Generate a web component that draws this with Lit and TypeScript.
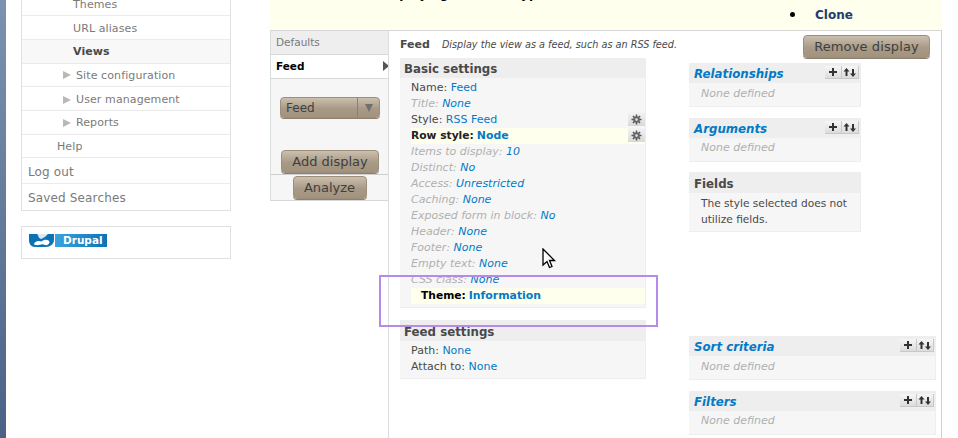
import { LitElement, html, css } from "lit";
import { customElement } from "lit/decorators.js";

const gear = html`<span class="gear"><svg width="11" height="11" viewBox="0 0 12 12"><g stroke="#555" stroke-width="1.6"><path d="M6 0.5V11.5M0.5 6H11.5M2.1 2.1L9.9 9.9M9.9 2.1L2.1 9.9"/></g><circle cx="6" cy="6" r="3.6" fill="#666"/><circle cx="6" cy="6" r="1.5" fill="#ddd"/></svg></span>`;

const addRearrange = html`<span class="ops"><span class="op"><svg width="10" height="10" viewBox="0 0 10 10"><path d="M5 1V9M1 5H9" stroke="#333" stroke-width="2"/></svg></span><span class="op"><svg width="14" height="11" viewBox="0 0 14 11"><path d="M3.5 1L6.5 4.5H4.5V9H2.5V4.5H0.5Z" fill="#333"/><path d="M10 10L13 6.5H11V2H9V6.5H7Z" fill="#333"/></svg></span></span>`;

@customElement("app-root")
export class AppRoot extends LitElement {
  static styles = css`
    :host { display: block; position: relative; width: 958px; height: 438px; overflow: hidden; background: #fff;
      font-family: "DejaVu Sans", sans-serif; font-size: 11px; color: #494949; }
    * { box-sizing: border-box; }
    a { color: #027ac6; text-decoration: none; }
    .page { display: flex; align-items: flex-start; height: 438px; }
    .strip { width: 6px; height: 438px; flex: none; background: linear-gradient(#7c92ae, #4a6286); }
    .side { width: 210px; margin-left: 15px; flex: none; }
    .menu { border: 1px solid #e0e0e0; border-top: 0; color: #7a7a7a; }
    .m { display: flex; align-items: center; height: 24px; border-bottom: 1px solid #ebebeb; font-size: 11px; letter-spacing: .1px; }
    .m:last-child { border-bottom: 0; }
    .first { height: 16px; padding-bottom: 7px; }
    .h23 { height: 23px; }
    .low { padding-top: 2px; }
    .l3 { padding-left: 51px; }
    .l2 { padding-left: 41px; }
    .l2::before { content: ""; width: 0; height: 0; margin-right: 5px; border-left: 8px solid #b8b8b8; border-top: 4px solid transparent; border-bottom: 4px solid transparent; }
    .l1 { padding-left: 35px; }
    .l0 { padding-left: 6px; padding-top: 2px; font-size: 12px; height: 26px; letter-spacing: .15px; }
    .cur { background: #f8f8f8; color: #494949; font-weight: bold; }
    .drupal { margin-top: 15px; height: 33px; border: 1px solid #e0e0e0; padding: 7px 7px; display: flex; }
    .logo { display: flex; width: 78px; height: 13px; }
    .logo .txt { margin-left: 1px; flex: 1; background: linear-gradient(90deg, #3ba3de, #0e73b5); color: #fff; font-size: 10.5px; font-weight: bold; line-height: 13px; padding-left: 8px; }

    .main { margin-left: 39px; width: 672px; flex: none; }
    .banner { height: 30px; background: #ffffee; position: relative; overflow: hidden; color: #000; }
    .banner .t { font-weight: bold; font-size: 12px; margin: -13px 0 0 68px; height: 18px; white-space: nowrap; }
    .banner ul { margin: 0; padding: 0; list-style: none; }
    .banner li { display: flex; align-items: center; margin: 2px 0 0 520px; font-size: 12px; font-weight: bold; color: #1f3c72; height: 15px; }
    .bullet { width: 5px; height: 5px; border-radius: 50%; background: #000; margin-right: 20px; }
    .view { display: flex; height: 408px; border-top: 1px solid #d6d6d6; border-right: 1px solid #d0d0d0; }
    .tabs { width: 119px; flex: none; height: 170px; border-left: 1px solid #d8dde0; border-bottom: 1px solid #d8d8d8; background: #f6f6f6; }
    .tab { height: 24px; display: flex; align-items: center; padding: 0 0 2px 5px; border-bottom: 1px solid #d8d8d8; background: #eee; color: #7a7a7a; border-right: 1px solid #d8dde0; font-size: 10.5px; }
    .tab.on { height: 24px; background: #fff; color: #000; font-weight: bold; border-right: 0; position: relative; }
    .tab.on::after { content: ""; position: absolute; right: 0; top: 6px; border-left: 6px solid #555; border-top: 5px solid transparent; border-bottom: 5px solid transparent; }
    .tabbody { height: 95px; padding: 18px 0 0 9px; border-right: 1px solid #d8dde0; display: flex; flex-direction: column; }
    .btn { display: flex; align-items: center; justify-content: center; background: linear-gradient(#cbbfae, #a89a86 55%, #a2937e); border: 1px solid #9c8e7a; border-radius: 4px; color: #3f3f3f; font-size: 13px; box-shadow: 0 1px 0 #8e8170; }
    .sel { width: 100px; height: 21px; justify-content: flex-start; padding-left: 5px; font-size: 12px; position: relative; }
    .sel .arr { position: absolute; right: 0; top: 0; bottom: 0; width: 22px; border-left: 1px solid #8e8170; display: flex; align-items: center; justify-content: center; }
    .sel .arr i { border-top: 8px solid #6f6f6f; border-left: 4px solid transparent; border-right: 4px solid transparent; }
    .add { width: 98px; height: 23px; margin: 0 0 0 1px; }
    .addwrap { margin-top: 32px; }
    .analyzewrap { height: 26px; border-top: 1px solid #cfcfcf; border-right: 1px solid #d8dde0; display: flex; justify-content: center; padding-top: 1px; }
    .analyze { width: 74px; height: 23px; }

    .content { flex: 1; border-left: 1px solid #d8dde0; margin-left: -1px; padding: 0 11px; position: relative; }
    .head { display: flex; align-items: center; height: 27px; }
    .head b { color: #494949; margin-right: 12px; }
    .head em { font-size: 9.7px; }
    .remove { position: absolute; right: 17px; top: 4px; width: 127px; height: 23px; letter-spacing: .12px; }
    .cols { display: flex; }
    .col1 { width: 246px; flex: none; }
    .col2 { margin-left: 43px; width: 247px; flex: none; }
    .box { background: #f6f6f6; border-right: 1px solid #eee; border-bottom: 1px solid #eee; }
    .box h3 { margin: 0; height: 20px; background: #eee; font-size: 11.8px; line-height: 23px; padding-left: 4px; font-weight: bold; color: #494949; display: flex; justify-content: space-between; }
    .rows { padding: 2px 0 5px 11px; }
    .r { height: 16px; line-height: 16px; white-space: nowrap; display: flex; align-items: center; gap: 3.5px; position: relative; }
    .r.off { color: #b0b0b0; font-style: italic; }
    .r.off a { font-style: italic; }
    .r.hl { background: #ffffee; font-weight: bold; color: #222; gap: 3px; }
    .r.hl span { font-size: 10.7px; }
    .r.hl a { font-size: 10.9px; }
    .r.theme { padding-left: 10px; color: #000; font-weight: bold; }
    .gear { position: absolute; right: 0; top: 0; width: 17px; height: 14px; background: linear-gradient(#f4f4f4, #d9d9d9); display: flex; align-items: center; justify-content: center; }
    .basic { height: 250px; }
    .feed { margin-top: 12px; height: 59px; }
    .feed h3 { height: 21px; line-height: 24px; }
    .feed .rows { padding-top: 2px; }
    .side-box h3 { font-style: italic; padding-left: 5px; }
    .side-box h3 a { color: #027ac6; }
    .none { padding: 4px 0 0 12px; color: #b0b0b0; font-style: italic; height: 23px; }
    .s2 .none { padding-top: 3px; }
    .short { width: 172px; }
    .ops { display: flex; margin: 3px 1px 0 0; height: 13px; }
    .op { width: 17px; height: 13px; background: linear-gradient(#f6f6f6, #dcdcdc); border-bottom: 1px solid #c8c8c8; border-right: 1px solid #c8c8c8; display: flex; align-items: center; justify-content: center; }
    .sb { height: 44px; }
    .fields { margin-top: 10px; height: 60px; }
    .fields h3 { padding-left: 5px; height: 21px; line-height: 24px; }
    .fields p { margin: 0; padding: 2px 0 0 12px; line-height: 16px; font-size: 10.6px; }
    .col2 .s1 { margin-top: 5px; }
    .col2 .s2 { margin-top: 11px; }
    .col2 .s3 { margin-top: 104px; }

    .purple { position: absolute; left: 379px; top: 275px; width: 279px; height: 52px; border: 2px solid #b58bea; }
    .cursor { position: absolute; left: 541px; top: 248px; }
  `;

  private row(label: string, value: string, cls = "", withGear = false) {
    return html`<div class="r ${cls}"><span>${label}</span><a>${value}</a>${withGear ? gear : ""}</div>`;
  }

  render() {
    return html`
      <div class="page">
        <div class="strip"></div>
        <div class="side">
          <div class="menu">
            <div class="m l3 first">Themes</div>
            <div class="m l3 low">URL aliases</div>
            <div class="m l3 cur">Views</div>
            <div class="m l2 h23">Site configuration</div>
            <div class="m l2 low">User management</div>
            <div class="m l2">Reports</div>
            <div class="m l1 h23">Help</div>
            <div class="m l0">Log out</div>
            <div class="m l0">Saved Searches</div>
          </div>
          <div class="drupal">
            <div class="logo">
              <svg width="25" height="13" viewBox="0 0 25 13"><path d="M0 0H25V6C25 10 21 13 17 13H6C2 13 0 10 0 6Z" fill="#0b72b5"/><path d="M8 0C10 2 9 4 12 5C15 4 17 2 19 0Z" fill="#dbe9f4"/><path d="M5 10.5C5 8 9 6 12.5 7.5C15 5 20 5.5 20.500 8C20.500 11 17 12 14.500 10.500C12 9.500 9.500 12.500 5 10.500Z" fill="#fff"/></svg>
              <div class="txt">Drupal</div>
            </div>
          </div>
        </div>
        <div class="main">
          <div class="banner">
            <div class="t">Feed, displaying nodes of type</div>
            <ul><li><span class="bullet"></span><span>Clone</span></li></ul>
          </div>
          <div class="view">
            <div class="tabs">
              <div class="tab">Defaults</div>
              <div class="tab on">Feed</div>
              <div class="tabbody">
                <div class="btn sel">Feed<span class="arr"><i></i></span></div>
                <div class="addwrap"><div class="btn add">Add display</div></div>
              </div>
              <div class="analyzewrap"><div class="btn analyze">Analyze</div></div>
            </div>
            <div class="content">
              <div class="head"><b>Feed</b><em>Display the view as a feed, such as an RSS feed.</em></div>
              <div class="btn remove">Remove display</div>
              <div class="cols">
                <div class="col1">
                  <div class="box basic">
                    <h3>Basic settings</h3>
                    <div class="rows">
                      ${this.row("Name:", "Feed")}
                      ${this.row("Title:", "None", "off")}
                      ${this.row("Style:", "RSS Feed", "", true)}
                      ${this.row("Row style:", "Node", "hl", true)}
                      ${this.row("Items to display:", "10", "off")}
                      ${this.row("Distinct:", "No", "off")}
                      ${this.row("Access:", "Unrestricted", "off")}
                      ${this.row("Caching:", "None", "off")}
                      ${this.row("Exposed form in block:", "No", "off")}
                      ${this.row("Header:", "None", "off")}
                      ${this.row("Footer:", "None", "off")}
                      ${this.row("Empty text:", "None", "off")}
                      ${this.row("CSS class:", "None", "off")}
                      ${this.row("Theme:", "Information", "hl theme")}
                    </div>
                  </div>
                  <div class="box feed">
                    <h3>Feed settings</h3>
                    <div class="rows">
                      ${this.row("Path:", "None")}
                      ${this.row("Attach to:", "None")}
                    </div>
                  </div>
                </div>
                <div class="col2">
                  <div class="box side-box short sb s1"><h3><a>Relationships</a>${addRearrange}</h3><div class="none">None defined</div></div>
                  <div class="box side-box short sb s2"><h3><a>Arguments</a>${addRearrange}</h3><div class="none">None defined</div></div>
                  <div class="box short fields"><h3>Fields</h3><p>The style selected does not utilize fields.</p></div>
                  <div class="box side-box sb s3"><h3><a>Sort criteria</a>${addRearrange}</h3><div class="none">None defined</div></div>
                  <div class="box side-box sb s2"><h3><a>Filters</a>${addRearrange}</h3><div class="none">None defined</div></div>
                </div>
              </div>
            </div>
          </div>
        </div>
      </div>
      <div class="purple"></div>
      <svg class="cursor" width="16" height="22" viewBox="0 0 16 22"><path d="M2 1V17L6 13.500L8.500 19.500L11 18.500L8.500 12.500H13.500Z" fill="#fff" stroke="#000" stroke-width="1.300"/></svg>
    `;
  }
}
